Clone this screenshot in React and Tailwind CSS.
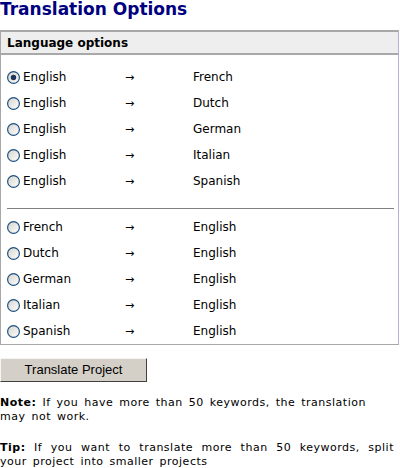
import { useState } from "react";

const toLangs = ["French", "Dutch", "German", "Italian", "Spanish"];

function Radio({ checked }) {
  return (
    <svg width="13" height="13" viewBox="0 0 13 13" className="shrink-0">
      <defs>
        <linearGradient id="rg" x1="0" y1="0" x2="1" y2="1">
          <stop offset="0" stopColor="#d6d3cc" />
          <stop offset="1" stopColor="#ffffff" />
        </linearGradient>
      </defs>
      <circle cx="6.5" cy="6.5" r="5.9" fill="url(#rg)" stroke="#1c5180" strokeWidth="1.2" />
      {checked && <circle cx="6.5" cy="6.5" r="2.7" fill="#21345a" />}
    </svg>
  );
}

function Row({ from, to, value, selected, onPick }) {
  return (
    <label
      className="grid grid-cols-[118px_68px_1fr] items-center h-[26px] cursor-pointer"
      onClick={() => onPick(value)}
    >
      <span className="flex items-center gap-[3px]">
        <Radio checked={selected === value} />
        <span>{from}</span>
      </span>
      <span className="text-[11px] leading-none">→</span>
      <span>{to}</span>
    </label>
  );
}

export default function App() {
  const [selected, setSelected] = useState("en-French");

  return (
    <div className="w-[400px] h-[468px] bg-white text-black font-['DejaVu_Sans',Verdana,sans-serif] text-[12px] overflow-hidden">
      <h1 className="text-[17px] font-bold leading-[20px] text-[#00007f] -mt-[1px]">
        Translation Options
      </h1>

      <div className="mt-[11px] w-[399px] border border-[#a8a8a8] border-r-[#b6b0d6]">
        <div className="bg-[#eeeeee] border-t border-b-2 border-[#a8a8a8] px-[6px] h-[24px] flex items-center font-bold">
          Language options
        </div>

        <div className="pl-[6px] pr-[4px] pt-[9px]">
          {toLangs.map((l) => (
            <Row key={l} from="English" to={l} value={"en-" + l} selected={selected} onPick={setSelected} />
          ))}
          <hr className="mt-[14px] mb-[5px] border-0 border-t border-[#808080]" />
          {toLangs.map((l) => (
            <Row key={l} from={l} to="English" value={l + "-en"} selected={selected} onPick={setSelected} />
          ))}
        </div>
      </div>

      <button className="mt-[13px] w-[147px] h-[24px] bg-[#d4d0c8] border border-t-[#f4f4f4] border-l-[#f4f4f4] border-r-[#404040] border-b-[#404040] font-['Liberation_Sans',Arial,sans-serif] text-[13px]">
        Translate Project
      </button>

      <div className="w-[394px] text-[11px] leading-[14px] tracking-[0.5px] [word-spacing:2px]">
        <p className="mt-[14px]">
          <b>Note:</b> If you have more than 50 keywords, the translation may not work.
        </p>
        <p className="mt-[17px] text-justify">
          <b>Tip:</b> If you want to translate more than 50 keywords, split your project into smaller projects
        </p>
      </div>
    </div>
  );
}
